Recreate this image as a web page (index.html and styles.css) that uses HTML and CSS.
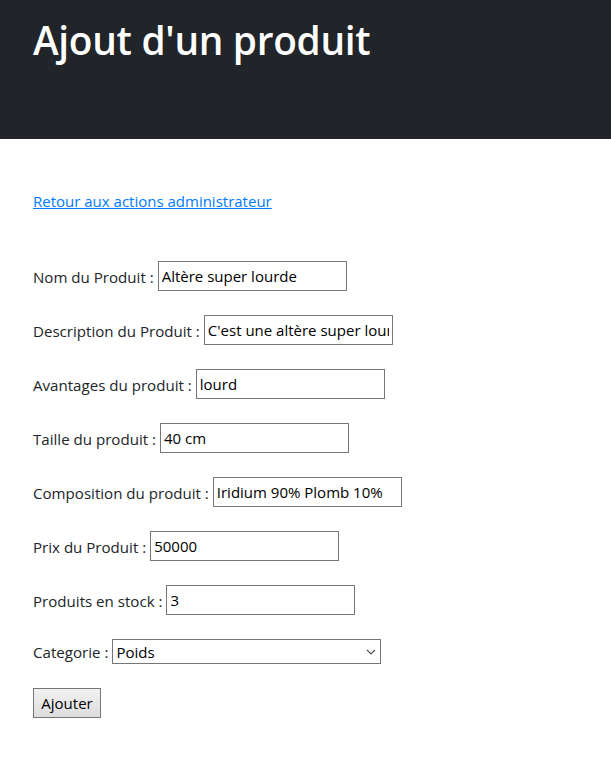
FILE: index.html
```html
<!DOCTYPE html>
<html lang="fr">
<head>
<meta charset="utf-8">
<title>Ajout d'un produit</title>
<link rel="stylesheet" href="styles.css">
</head>
<body>
<header class="jumbo">
  <h1 class="title">Ajout d'un produit</h1>
</header>
<main class="content">
  <a class="back" href="#">Retour aux actions administrateur</a>
  <form class="form">
    <div class="field"><label>Nom du Produit :</label><input class="txt" type="text" value="Altère super lourde"></div>
    <div class="field"><label>Description du Produit :</label><input class="txt" type="text" value="C'est une altère super lourde"></div>
    <div class="field"><label>Avantages du produit :</label><input class="txt" type="text" value="lourd"></div>
    <div class="field"><label>Taille du produit :</label><input class="txt" type="text" value="40 cm"></div>
    <div class="field"><label>Composition du produit :</label><input class="txt" type="text" value="Iridium 90% Plomb 10%"></div>
    <div class="field"><label>Prix du Produit :</label><input class="txt" type="text" value="50000"></div>
    <div class="field"><label>Produits en stock :</label><input class="txt" type="text" value="3"></div>
    <div class="field field-select"><label>Categorie :</label><span class="select-wrap"><select class="sel"><option>Poids</option></select><svg class="chev" width="10" height="6" viewBox="0 0 10 6"><path d="M1 1 L5 5 L9 1" fill="none" stroke="#555" stroke-width="1.2"/></svg></span></div>
    <div class="actions"><button class="btn" type="button">Ajouter</button></div>
  </form>
</main>
</body>
</html>
```
FILE: styles.css
```css
html, body {
  margin: 0;
  padding: 0;
}
body {
  font-family: "Open Sans", "Noto Sans", "Liberation Sans", sans-serif;
  font-size: 16px;
  line-height: 1.5;
  color: #212529;
  background: #fff;
}
.jumbo {
  background: #212529;
  height: 139px;
  box-sizing: border-box;
  padding: 17px 33px 0;
}
.title {
  margin: 0;
  color: #fff;
  font-size: 38.8px;
  font-weight: 600;
  line-height: 1.2;
  letter-spacing: -0.3px;
}
.content {
  padding: 50px 33px 0;
}
.back {
  display: inline-block;
  color: #007bff;
  text-decoration: underline;
  font-size: 15px;
  line-height: 24px;
}
.form {
  display: flex;
  flex-direction: column;
  gap: 24px;
  margin-top: 48px;
}
.field {
  display: flex;
  align-items: center;
  gap: 4px;
  height: 30px;
  font-size: 15.1px;
  white-space: pre;
}
.field label {
  position: relative;
  top: 1px;
}
.field-select {
  height: 25px;
}
.txt {
  box-sizing: border-box;
  width: 189px;
  height: 30px;
  margin: 0;
  padding: 0 3px;
  border: 1px solid #767676;
  border-radius: 0;
  font-family: inherit;
  font-size: 15px;
  line-height: 28px;
  color: #000;
  background: #fff;
}
.select-wrap {
  position: relative;
  display: inline-block;
}
.sel {
  appearance: none;
  -webkit-appearance: none;
  box-sizing: border-box;
  width: 269px;
  height: 25px;
  margin: 0;
  padding: 0 3px;
  border: 1px solid #767676;
  border-radius: 0;
  font-family: inherit;
  font-size: 15px;
  color: #000;
  background: #fff;
  display: block;
}
.chev {
  position: absolute;
  right: 5px;
  top: 10px;
}
.btn {
  box-sizing: border-box;
  width: 68px;
  height: 30px;
  padding: 0;
  border: 1px solid #767676;
  border-radius: 0;
  background: linear-gradient(#f2f2f2, #dcdcdc);
  font-family: inherit;
  font-size: 15px;
  color: #000;
}
```
